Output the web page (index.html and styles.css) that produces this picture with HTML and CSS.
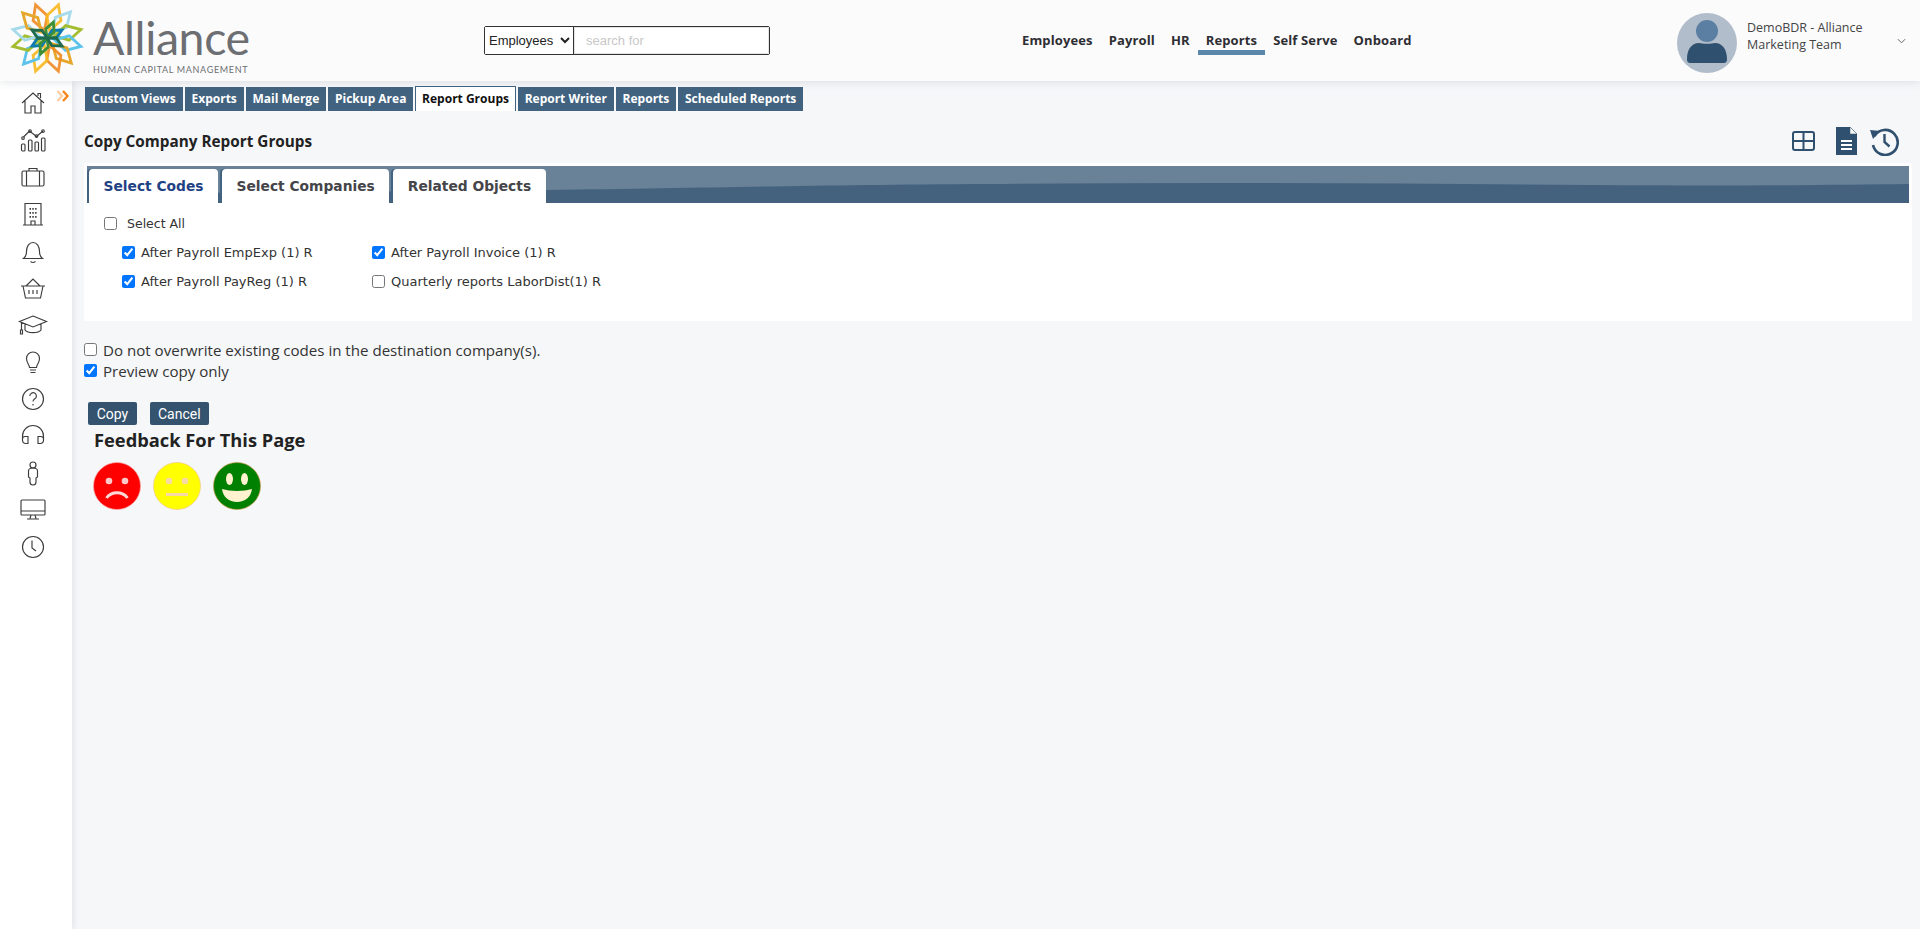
FILE: index.html
```html
<!DOCTYPE html>
<html lang="en">
<head>
<meta charset="utf-8">
<title>Copy Company Report Groups</title>
<link rel="stylesheet" href="styles.css">
</head>
<body>
<header class="topbar">
  <a class="logo">
    <svg class="logo-mark" viewBox="0 0 92 78" width="92" height="78">
      <defs>
        <polygon id="petal" points="0,-8 -7.500,-21 0,-35 7.500,-21"/>
        <polygon id="inner" points="0,0 -4.500,-8 0,-17 4.500,-8"/>
      </defs>
      <g fill="none" stroke-width="2.800" transform="translate(47 38)">
        <use href="#petal" stroke="#f08a24" transform="rotate(-19)" opacity="0.9"/>
        <use href="#petal" stroke="#f7b81f" transform="rotate(19)" opacity="0.9"/>
        <use href="#petal" stroke="#a5dbea" transform="rotate(42)"/>
        <use href="#petal" stroke="#a4bd2f" transform="rotate(76)"/>
        <use href="#petal" stroke="#5cc4ea" transform="rotate(104)"/>
        <use href="#petal" stroke="#e6a82c" transform="rotate(136)"/>
        <use href="#petal" stroke="#f08a24" transform="rotate(161)" opacity="0.9"/>
        <use href="#petal" stroke="#f7b81f" transform="rotate(199)" opacity="0.9"/>
        <use href="#petal" stroke="#5cc4ea" transform="rotate(222)"/>
        <use href="#petal" stroke="#a4bd2f" transform="rotate(256)"/>
        <use href="#petal" stroke="#a5dbea" transform="rotate(284)"/>
        <use href="#petal" stroke="#e6a82c" transform="rotate(316)"/>
        <use href="#inner" stroke="#0e7ab0" transform="rotate(62)"/>
        <use href="#inner" stroke="#0e7ab0" transform="rotate(242)"/>
        <use href="#inner" stroke="#3e8f34" transform="rotate(22)"/>
        <use href="#inner" stroke="#3e8f34" transform="rotate(202)"/>
        <use href="#inner" stroke="#1f6b4e" transform="rotate(118)"/>
        <use href="#inner" stroke="#1f6b4e" transform="rotate(298)"/>
      </g>
    </svg>
    <span class="logo-text">
      <span class="logo-name">Alliance</span>
      <span class="logo-sub">HUMAN CAPITAL MANAGEMENT</span>
    </span>
  </a>
  <form class="search">
    <select class="search-select"><option>Employees</option></select>
    <input class="search-input" type="text" placeholder="search for">
  </form>
  <nav class="mainnav">
    <a class="mainnav-item">Employees</a>
    <a class="mainnav-item">Payroll</a>
    <a class="mainnav-item">HR</a>
    <a class="mainnav-item is-active">Reports</a>
    <a class="mainnav-item">Self Serve</a>
    <a class="mainnav-item">Onboard</a>
  </nav>
  <div class="user">
    <svg class="avatar" viewBox="0 0 60 60" width="60" height="60">
      <circle cx="30" cy="30" r="30" fill="#b2bdcb"/>
      <circle cx="30" cy="18" r="11" fill="#5a7fa3"/>
      <path d="M10 46 C10 36 15 30 22 30 C26 31 34 31 38 30 C45 30 50 36 50 46 C50 49 49 50 46 50 H14 C11 50 10 49 10 46Z" fill="#30506f"/>
    </svg>
    <div class="user-name">DemoBDR - Alliance<br>Marketing Team</div>
    <svg class="user-chevron" viewBox="0 0 10 6" width="9" height="6"><path d="M1 1l4 4 4-4" fill="none" stroke="#555" stroke-width="1"/></svg>
  </div>
</header>

<div class="shell">
  <aside class="sidebar">
    <svg class="expand" viewBox="0 0 14 12" width="14" height="12"><path d="M1.500 1l4.500 5-4.500 5" fill="none" stroke="#fbcfa6" stroke-width="2.400"/><path d="M7 1l4.500 5L7 11" fill="none" stroke="#f5851a" stroke-width="2.400"/></svg>
    <a class="side-item"><svg class="ico" viewBox="0 0 26 26"><path d="M2 13 13 3l11 10M5 10.500V23h6v-7h4v7h6V10.500M18 6V3.500h2.500V8.300"/></svg></a>
    <a class="side-item"><svg class="ico" viewBox="0 0 26 26"><rect x="1.500" y="17" width="3.500" height="7" rx="1"/><rect x="8.500" y="13" width="3.500" height="11" rx="1"/><rect x="15" y="15" width="3.500" height="9" rx="1"/><rect x="21.500" y="11" width="3.500" height="13" rx="1"/><path d="M3.500 10 9.500 4l7 5.500L23 4"/><circle cx="3" cy="11" r="1.300"/><circle cx="10" cy="4" r="1.300"/><circle cx="16.500" cy="9" r="1.300"/><circle cx="23" cy="4" r="1.300"/></svg></a>
    <a class="side-item"><svg class="ico" viewBox="0 0 26 26"><rect x="2" y="7" width="22" height="15" rx="1.500"/><path d="M9 7V4.500h8V7M6.500 7v15M19.500 7v15"/></svg></a>
    <a class="side-item"><svg class="ico" viewBox="0 0 26 26"><path d="M5 24V2.500h16V24M3 24h20M11 24v-4h4v4"/><path class="dots" d="M9.500 7h1.500v1.800H9.500zM12.300 7h1.500v1.800h-1.500zM15.100 7h1.500v1.800h-1.500zM9.500 11h1.500v1.800H9.500zM12.300 11h1.500v1.800h-1.500zM15.100 11h1.500v1.800h-1.500zM9.500 15h1.500v1.800H9.500zM12.300 15h1.500v1.800h-1.500zM15.100 15h1.500v1.800h-1.500z"/></svg></a>
    <a class="side-item"><svg class="ico" viewBox="0 0 26 26"><path d="M3.500 20.500c2-1.500 3-3 3-7 0-5 2.500-9 6.500-9s6.500 4 6.500 9c0 4 1 5.500 3 7zM10.500 23.500c1.500 1.200 3.500 1.200 5 0"/></svg></a>
    <a class="side-item"><svg class="ico" viewBox="0 0 26 26"><path d="M1 11h24M3 11l2.500 12h15L23 11M6 11l7-7 7 7M9 15v4M13 15v4M17 15v4"/></svg></a>
    <a class="side-item"><svg class="ico ico-wide" viewBox="0 0 28 20"><path d="M14 1 27.500 6.500 14 12 .5 6.500zM6 9v6c2.500 3.500 13.500 3.500 16 0V9M2.500 7.500V15M1.500 15h2v4h-2z"/></svg></a>
    <a class="side-item"><svg class="ico" viewBox="0 0 26 26"><path d="M9.500 18.500c0-3-3-4.500-3-9a6.500 6.500 0 0 1 13 0c0 4.500-3 6-3 9zM10 21h6M10.500 23.500h5"/></svg></a>
    <a class="side-item"><svg class="ico" viewBox="0 0 26 26"><circle cx="13" cy="13" r="10.500"/><path d="M9.800 10a3.300 3.300 0 1 1 5 2.800c-1.200.8-1.800 1.400-1.800 2.800M13 18v1.400"/></svg></a>
    <a class="side-item"><svg class="ico" viewBox="0 0 26 26"><path d="M2.500 17v-4a10.500 10.500 0 0 1 21 0v4M8 13.500H5a2.500 2.500 0 0 0-2.500 2.500v1A3.500 3.500 0 0 0 6 20.500h2zM18 13.500h3a2.500 2.500 0 0 1 2.500 2.500v1a3.500 3.500 0 0 1-3.500 3.500h-2z"/></svg></a>
    <a class="side-item"><svg class="ico" viewBox="0 0 26 26"><circle cx="13" cy="5" r="3"/><path d="M8.500 11c0-1.800 1.500-3 4.500-3s4.500 1.200 4.500 3v6l-1.500 1v4a3 3 0 0 1-6 0v-4l-1.500-1z"/></svg></a>
    <a class="side-item"><svg class="ico" viewBox="0 0 26 26"><rect x="1" y="3" width="24" height="15" rx="1"/><path d="M1 14h24M11 18l-1 3.500M15 18l1 3.500M7 22h12"/></svg></a>
    <a class="side-item"><svg class="ico" viewBox="0 0 26 26"><circle cx="13" cy="13" r="10.500"/><path d="M12 6.500v7.500l4 3"/></svg></a>
  </aside>

  <main class="content">
    <ul class="subtabs">
      <li class="subtab">Custom Views</li>
      <li class="subtab">Exports</li>
      <li class="subtab">Mail Merge</li>
      <li class="subtab">Pickup Area</li>
      <li class="subtab is-active">Report Groups</li>
      <li class="subtab">Report Writer</li>
      <li class="subtab">Reports</li>
      <li class="subtab">Scheduled Reports</li>
    </ul>

    <div class="title-row">
      <h1 class="page-title">Copy Company Report Groups</h1>
      <div class="tools">
        <svg class="tool-table" viewBox="0 0 23 20" width="23" height="20"><rect x="1" y="1" width="21" height="18" rx="2" fill="none" stroke="#30506f" stroke-width="2"/><path d="M1 10h21M11.500 1v18" stroke="#30506f" stroke-width="2"/></svg>
        <svg class="tool-doc" viewBox="0 0 23 30" width="23" height="30"><path d="M1 1h14l7 7v21H1z" fill="#30506f"/><path d="M15 1v7h7z" fill="#f6f7f9" stroke="#30506f" stroke-width="0.500"/><path d="M6 15h11M6 19h11M6 23h11" stroke="#fff" stroke-width="2"/></svg>
        <svg class="tool-history" viewBox="0 0 30 30" width="30" height="30"><path d="M5.500 10a12.500 12.500 0 1 1-1.500 9" fill="none" stroke="#30506f" stroke-width="2.600"/><path d="M1 4l10 1-7 8z" fill="#30506f"/><path d="M15.500 8v8l5 4.500" fill="none" stroke="#30506f" stroke-width="2.400"/></svg>
      </div>
    </div>

    <section class="panel">
      <div class="banner">
        <svg class="wave" viewBox="0 0 1822 37" preserveAspectRatio="none"><path d="M0 37V27C200 27 330 25 460 24 620 22 720 19 900 18 1100 16 1300 17 1500 19 1650 20 1750 19 1822 18V37Z" fill="#44627e"/></svg>
        <a class="ptab is-active">Select Codes</a>
        <a class="ptab">Select Companies</a>
        <a class="ptab">Related Objects</a>
      </div>
      <div class="panel-body">
        <label class="select-all"><input type="checkbox"><span>Select All</span></label>
        <div class="codes">
          <label class="code"><input type="checkbox" checked><span>After Payroll EmpExp (1) R</span></label>
          <label class="code"><input type="checkbox" checked><span>After Payroll Invoice (1) R</span></label>
          <label class="code"><input type="checkbox" checked><span>After Payroll PayReg (1) R</span></label>
          <label class="code"><input type="checkbox"><span>Quarterly reports LaborDist(1) R</span></label>
        </div>
      </div>
    </section>

    <div class="options">
      <label class="option"><input type="checkbox"><span>Do not overwrite existing codes in the destination company(s).</span></label>
      <label class="option"><input type="checkbox" checked><span>Preview copy only</span></label>
    </div>

    <div class="actions">
      <button class="btn btn-copy" type="button">Copy</button>
      <button class="btn" type="button">Cancel</button>
    </div>

    <h2 class="feedback-title">Feedback For This Page</h2>
    <div class="feedback">
      <svg viewBox="0 0 48 48" width="48" height="48"><circle cx="24" cy="24" r="23.500" fill="#fe0000" stroke="#f8a0a0" stroke-width="0.700"/><circle cx="16" cy="19" r="3.300" fill="#ffc9c9"/><circle cx="32" cy="19" r="3.300" fill="#ffc9c9"/><path d="M13.500 36c5-7 16-7 21 0" fill="none" stroke="#ffd8d8" stroke-width="3"/></svg>
      <svg viewBox="0 0 48 48" width="48" height="48"><circle cx="24" cy="24" r="23.500" fill="#ffff00" stroke="#f3c98a" stroke-width="0.700"/><circle cx="16" cy="19" r="3.300" fill="#f7d9a5"/><circle cx="32" cy="19" r="3.300" fill="#f7d9a5"/><rect x="13" y="31" width="22" height="3" fill="#f7d9a5"/></svg>
      <svg viewBox="0 0 48 48" width="48" height="48"><circle cx="24" cy="24" r="23.500" fill="#008000" stroke="#c49a4a" stroke-width="0.700"/><ellipse cx="16.500" cy="17" rx="3.500" ry="6" fill="#fff2cf"/><ellipse cx="31.500" cy="17" rx="3.500" ry="6" fill="#fff2cf"/><path d="M9 27c8 2.500 22 2.500 30 0-1 8-7 13-15 13S10 35 9 27z" fill="#fff2cf"/></svg>
    </div>
  </main>
</div>
</body>
</html>
```
FILE: styles.css
```css
* { box-sizing: border-box; }
html, body { margin: 0; height: 100%; }
body {
  background: #f6f7f9;
  color: #333;
  font-family: "Open Sans", "Noto Sans", sans-serif;
  overflow: hidden;
}
.topbar {
  position: relative;
  z-index: 2;
  display: flex;
  align-items: center;
  height: 81px;
  background: #fbfbfc;
  box-shadow: 0 2px 8px rgba(60, 70, 90, 0.12);
}
.logo { display: flex; align-items: flex-start; width: 484px; flex: none; height: 81px; }
.logo-mark { flex: none; }
.logo-text { display: flex; flex-direction: column; margin-left: 1px; }
.logo-name {
  font-family: "Lato", sans-serif;
  font-size: 46.500px;
  line-height: 58px;
  margin-top: 8px;
  color: #6d6e72;
  letter-spacing: -0.4px;
}
.logo-sub {
  font-family: "Lato", sans-serif;
  font-size: 9px;
  line-height: 12px;
  letter-spacing: 0.660px;
  color: #6d6e72;
  margin-top: -2px;
  white-space: nowrap;
}
.search {
  display: flex;
  flex: none;
  width: 286px;
  height: 29px;
  border: 1px solid #333;
  border-radius: 2px;
  background: #fff;
  margin-top: -1px;
}
.search-select {
  width: 89px;
  border: 0;
  border-right: 1px solid #333;
  background: #fff;
  font: 13px "Liberation Sans", Arial, sans-serif;
  color: #222;
  padding: 0;
  outline: 0;
}
.search-input {
  flex: 1;
  min-width: 0;
  border: 1px solid #e4e4e4;
  padding: 0 11px;
  font: 13px "Liberation Sans", Arial, sans-serif;
  outline: 0;
}
.search-input::placeholder { color: #c8c8c8; }
.mainnav { display: flex; flex: none; margin-left: 244px; height: 81px; align-items: flex-start; padding-top: 26px; }
.mainnav-item {
  padding: 6px 8px 7px;
  height: 29px;
  font-size: 13px;
  line-height: 16px;
  font-weight: 700;
  letter-spacing: 0.130px;
  color: #2e2e33;
  white-space: nowrap;
  border-bottom: 5px solid transparent;
}
.mainnav-item.is-active { border-bottom-color: #5b87ab; }
.user { display: flex; align-items: center; margin-left: auto; width: 243px; flex: none; height: 81px; }
.avatar { flex: none; align-self: flex-start; margin-top: 13px; }
.user-name { margin-left: 10px; margin-top: -9px; font-size: 12.500px; line-height: 17px; color: #444; width: 141px; flex: none; }
.user-chevron { margin-left: 9px; margin-top: 0; }

.shell { display: flex; height: calc(100% - 81px); }
.sidebar {
  position: relative;
  z-index: 1;
  flex: none;
  width: 72px;
  padding: 3.500px 14px 0 0;
  background: #fff;
  box-shadow: 2px 0 6px rgba(60, 70, 90, 0.10);
}
.expand { position: absolute; left: 56px; top: 9px; }
.side-item { display: flex; align-items: center; justify-content: center; height: 37px; width: 65px; }
.ico { width: 26px; height: 26px; fill: none; stroke: #3c3c3c; stroke-width: 1.150; overflow: visible; }
.ico-wide { width: 28px; height: 20px; }
.ico .dots { fill: #3c3c3c; stroke: none; }

.content { flex: 1; min-width: 0; padding: 5px 8px 0 12px; }
.subtabs { display: flex; gap: 1.700px; list-style: none; margin: 0; padding: 0 0 0 1px; height: 25px; align-items: flex-end; }
.subtab {
  height: 24px;
  padding: 0 7px;
  line-height: 24px;
  background: #41637f;
  color: #fff;
  font-size: 12px;
  font-weight: 700;
  white-space: nowrap;
}
.subtab.is-active { background: #fff; color: #111; height: 25px; padding: 0 6px; border: 1px solid #41637f; border-bottom: 0; }
.title-row { display: flex; justify-content: space-between; align-items: center; height: 52px; padding-top: 8px; }
.page-title { margin: 0; font-size: 15.300px; font-weight: 700; color: #222; }
.tools { display: flex; align-items: center; }
.tool-table { margin-right: 20px; }
.tool-doc { margin-right: 11px; }
.tool-history { margin-right: 13px; }

.panel { background: #fff; height: 158px; padding: 3px; }
.banner {
  position: relative;
  display: flex;
  gap: 4px;
  height: 37px;
  padding: 3px 0 0 2px;
  background: #698298;
}
.wave { position: absolute; left: 0; top: 0; width: 100%; height: 100%; }
.ptab {
  position: relative;
  height: 34px;
  padding: 0 14.500px;
  line-height: 34px;
  background: #fff;
  border-radius: 4px 4px 0 0;
  font-family: "DejaVu Sans", Verdana, sans-serif;
  font-size: 13.800px;
  font-weight: 700;
  color: #444449;
  white-space: nowrap;
  box-shadow: -2px 0 0 #41637f;
}
.ptab.is-active { color: #1f4284; }
.panel-body { padding: 9px 0 0 0; font-family: "DejaVu Sans", Verdana, sans-serif; font-size: 12.500px; color: #333; }
.select-all { display: flex; align-items: center; padding-left: 17px; height: 22px; }
.select-all input { margin: 0 10px 0 0; }
.codes { display: grid; grid-template-columns: 250px auto; justify-content: start; row-gap: 9.500px; padding: 8px 0 0 35px; font-size: 13px; }
.code { display: flex; align-items: center; height: 20px; }
.code input { margin: 0 6px 0 0; }

.options { padding: 18px 0 0 0; font-size: 15.100px; color: #333; }
.option { display: flex; align-items: center; height: 21px; }
.option input { margin: 0 6px 0 0; }
.actions { display: flex; gap: 13px; padding: 21px 0 0 4px; }
.btn {
  height: 23px;
  padding: 0 8px;
  border: 0;
  border-radius: 2px;
  background: #34536f;
  color: #fff;
  font: 14px "Roboto", sans-serif;
}
.btn-copy { width: 49px; }
.feedback-title { margin: 3px 0 0 10px; font-size: 18.300px; line-height: 24px; font-weight: 700; color: #222; }
.feedback { display: flex; gap: 12px; padding: 10px 0 0 9px; }
```
